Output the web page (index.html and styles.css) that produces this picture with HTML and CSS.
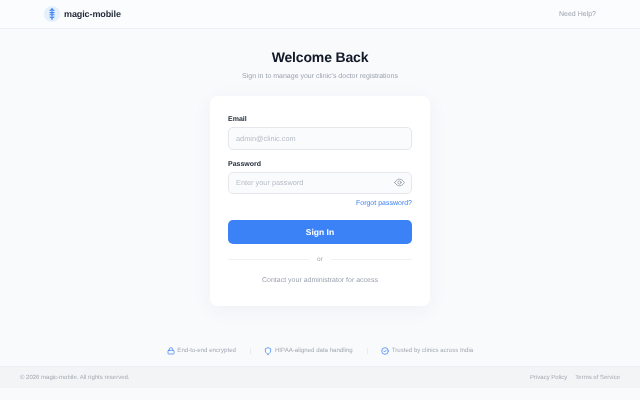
FILE: index.html
```html
<!DOCTYPE html>
<html lang="en">

<head>
    <meta charset="UTF-8">
    <meta name="viewport" content="width=device-width, initial-scale=1.0">
    <title>Sign In</title>
    <link rel="stylesheet" href="styles.css">
</head>

<body>
    <header class="topbar">
        <div class="brand">
            <span class="brand-mark">
                <svg width="10" height="12" viewBox="0 0 10 12" fill="none" stroke="#3b82f6" stroke-width="1.1" stroke-linecap="round">
                    <path d="M5 .5v11" />
                    <path d="M3 2.400 5 1.400l2 1" />
                    <path d="M3 4.600h4" />
                    <path d="M3 6.800h4" />
                    <path d="M3 9l2 1 2-1" />
                </svg>
            </span>
            <span class="brand-name">magic-mobile</span>
        </div>
        <a class="help-link" href="#">Need Help?</a>
    </header>

    <main class="content">
        <h1 class="title">Welcome Back</h1>
        <p class="subtitle">Sign in to manage your clinic's doctor registrations</p>

        <form class="card">
            <div class="field">
                <label class="field-label" for="email">Email</label>
                <input class="field-input" type="email" id="email" placeholder="admin@clinic.com">
            </div>
            <div class="field">
                <label class="field-label" for="password">Password</label>
                <div class="password-wrap">
                    <input class="field-input" type="password" id="password" placeholder="Enter your password">
                    <svg class="eye-icon" width="11" height="11" viewBox="0 0 24 24" fill="none" stroke="#9ca3af" stroke-width="2" stroke-linecap="round" stroke-linejoin="round">
                        <path d="M1.5 12S5.5 4.5 12 4.5 22.5 12 22.5 12 18.500 19.500 12 19.500 1.500 12 1.500 12z" />
                        <circle cx="12" cy="12" r="3.500" />
                    </svg>
                </div>
            </div>
            <a class="forgot-link" href="#">Forgot password?</a>
            <button class="btn-signin" type="button">Sign In</button>
            <div class="divider"><span>or</span></div>
            <p class="contact-note">Contact your administrator for access</p>
        </form>

        <ul class="trust-row">
            <li class="trust-item">
                <svg width="8" height="8" viewBox="0 0 24 24" fill="none" stroke="#3b82f6" stroke-width="2.200" stroke-linecap="round" stroke-linejoin="round">
                    <rect x="3" y="10" width="18" height="11" rx="2" />
                    <path d="M7 10V7a5 5 0 0 1 10 0v3" />
                </svg>
                End-to-end encrypted
            </li>
            <li class="trust-sep"></li>
            <li class="trust-item">
                <svg width="8" height="8" viewBox="0 0 24 24" fill="none" stroke="#3b82f6" stroke-width="2.200" stroke-linecap="round" stroke-linejoin="round">
                    <path d="M12 22s8-4 8-10V5l-8-3-8 3v7c0 6 8 10 8 10z" />
                </svg>
                HIPAA-aligned data handling
            </li>
            <li class="trust-sep"></li>
            <li class="trust-item">
                <svg width="8" height="8" viewBox="0 0 24 24" fill="none" stroke="#3b82f6" stroke-width="2.200" stroke-linecap="round" stroke-linejoin="round">
                    <circle cx="12" cy="12" r="10" />
                    <path d="M8 12l3 3 5-6" />
                </svg>
                Trusted by clinics across India
            </li>
        </ul>
    </main>

    <footer class="site-footer">
        <span>© 2026 magic-mobile. All rights reserved.</span>
        <nav class="footer-links">
            <a href="#">Privacy Policy</a>
            <a href="#">Terms of Service</a>
        </nav>
    </footer>
</body>

</html>
```

FILE: styles.css
```css
* {
    box-sizing: border-box;
    margin: 0;
    padding: 0;
}

html,
body {
    height: 400px;
    overflow: hidden;
}

body {
    background-color: #f9fafc;
    font-family: "Liberation Sans", Arial, sans-serif;
    color: #111827;
    text-rendering: geometricPrecision;
}

a {
    text-decoration: none;
    color: inherit;
}

/* own layers, so the text is antialiased in grey */
.topbar > *,
.content,
.site-footer > * {
    will-change: transform;
}

/* Top bar */
.topbar {
    height: 29px;
    padding: 0 44px;
    display: flex;
    align-items: center;
    justify-content: space-between;
    background-color: #fbfcfe;
    border-bottom: 1px solid #eef0f4;
}

.brand {
    display: flex;
    align-items: center;
    gap: 4px;
}

.brand-mark {
    width: 16px;
    height: 16px;
    border-radius: 50%;
    background-color: #e6effc;
    display: flex;
    align-items: center;
    justify-content: center;
}

.brand-name {
    font-size: 9px;
    letter-spacing: -0.1px;
    font-weight: 700;
    color: #1f2937;
}

.help-link {
    font-size: 7px;
    color: #9ca3af;
}

/* Main column */
.content {
    height: 337px;
    display: flex;
    flex-direction: column;
    align-items: center;
    padding-top: 19px;
}

.title {
    font-size: 14px;
    letter-spacing: -0.16px;
    line-height: 18px;
    font-weight: 700;
    color: #111827;
}

.subtitle {
    margin-top: 4.500px;
    margin-bottom: 14.500px;
    font-size: 7px;
    line-height: 11px;
    color: #9ca3af;
}

.card {
    width: 220px;
    height: 210px;
    padding: 18px;
    border-radius: 8px;
    background-color: #fff;
    box-shadow: 0 4px 20px rgba(30, 50, 90, 0.05);
    display: flex;
    flex-direction: column;
}

.field {
    margin-bottom: 9px;
}

.field-label {
    display: block;
    margin-bottom: 1px;
    font-size: 7px;
    line-height: 12px;
    font-weight: 700;
    color: #1f2937;
}

.field-input {
    display: block;
    width: 100%;
    height: 22.500px;
    padding: 0 7px;
    border: 1px solid #e5e7eb;
    border-radius: 5px;
    background-color: #fafbfd;
    font-family: inherit;
    font-size: 7.350px;
    color: #111827;
    text-rendering: geometricPrecision;
}

.field-input::placeholder {
    color: #b6bcc6;
    opacity: 1;
}

.password-wrap {
    position: relative;
}

.eye-icon {
    position: absolute;
    top: 5.500px;
    right: 7.500px;
}

.forgot-link {
    align-self: flex-end;
    margin-top: -4px;
    font-size: 7px;
    line-height: 10px;
    color: #3b82f6;
}

.btn-signin {
    margin-top: 11px;
    height: 24px;
    flex-shrink: 0;
    border: none;
    border-radius: 5px;
    background-color: #3b82f6;
    color: #fff;
    font-family: inherit;
    font-size: 8.500px;
    font-weight: 700;
    text-rendering: geometricPrecision;
    cursor: pointer;
}

.divider {
    margin-top: 10.500px;
    display: flex;
    align-items: center;
    gap: 8px;
    font-size: 6.500px;
    line-height: 10px;
    color: #9ca3af;
}

.divider::before,
.divider::after {
    content: "";
    flex: 1;
    height: 1px;
    background-color: #eef0f3;
}

.contact-note {
    margin-top: 11.500px;
    text-align: center;
    font-size: 7px;
    line-height: 10px;
    color: #9ca3af;
}

/* Trust badges */
.trust-row {
    margin-top: 40px;
    list-style: none;
    display: flex;
    align-items: center;
    gap: 13.750px;
    font-size: 6.100px;
    line-height: 10px;
    color: #a3a9b3;
}

.trust-item {
    display: flex;
    align-items: center;
    gap: 2.500px;
}

.trust-sep {
    width: 1px;
    height: 6px;
    background-color: #e9ebef;
}

/* Footer */
.site-footer {
    height: 22px;
    padding: 0 20px;
    display: flex;
    align-items: center;
    justify-content: space-between;
    background-color: #f3f4f6;
    border-top: 1px solid #eceef2;
    font-size: 6px;
    color: #a3a9b3;
}

.footer-links {
    display: flex;
    gap: 8px;
}
```
